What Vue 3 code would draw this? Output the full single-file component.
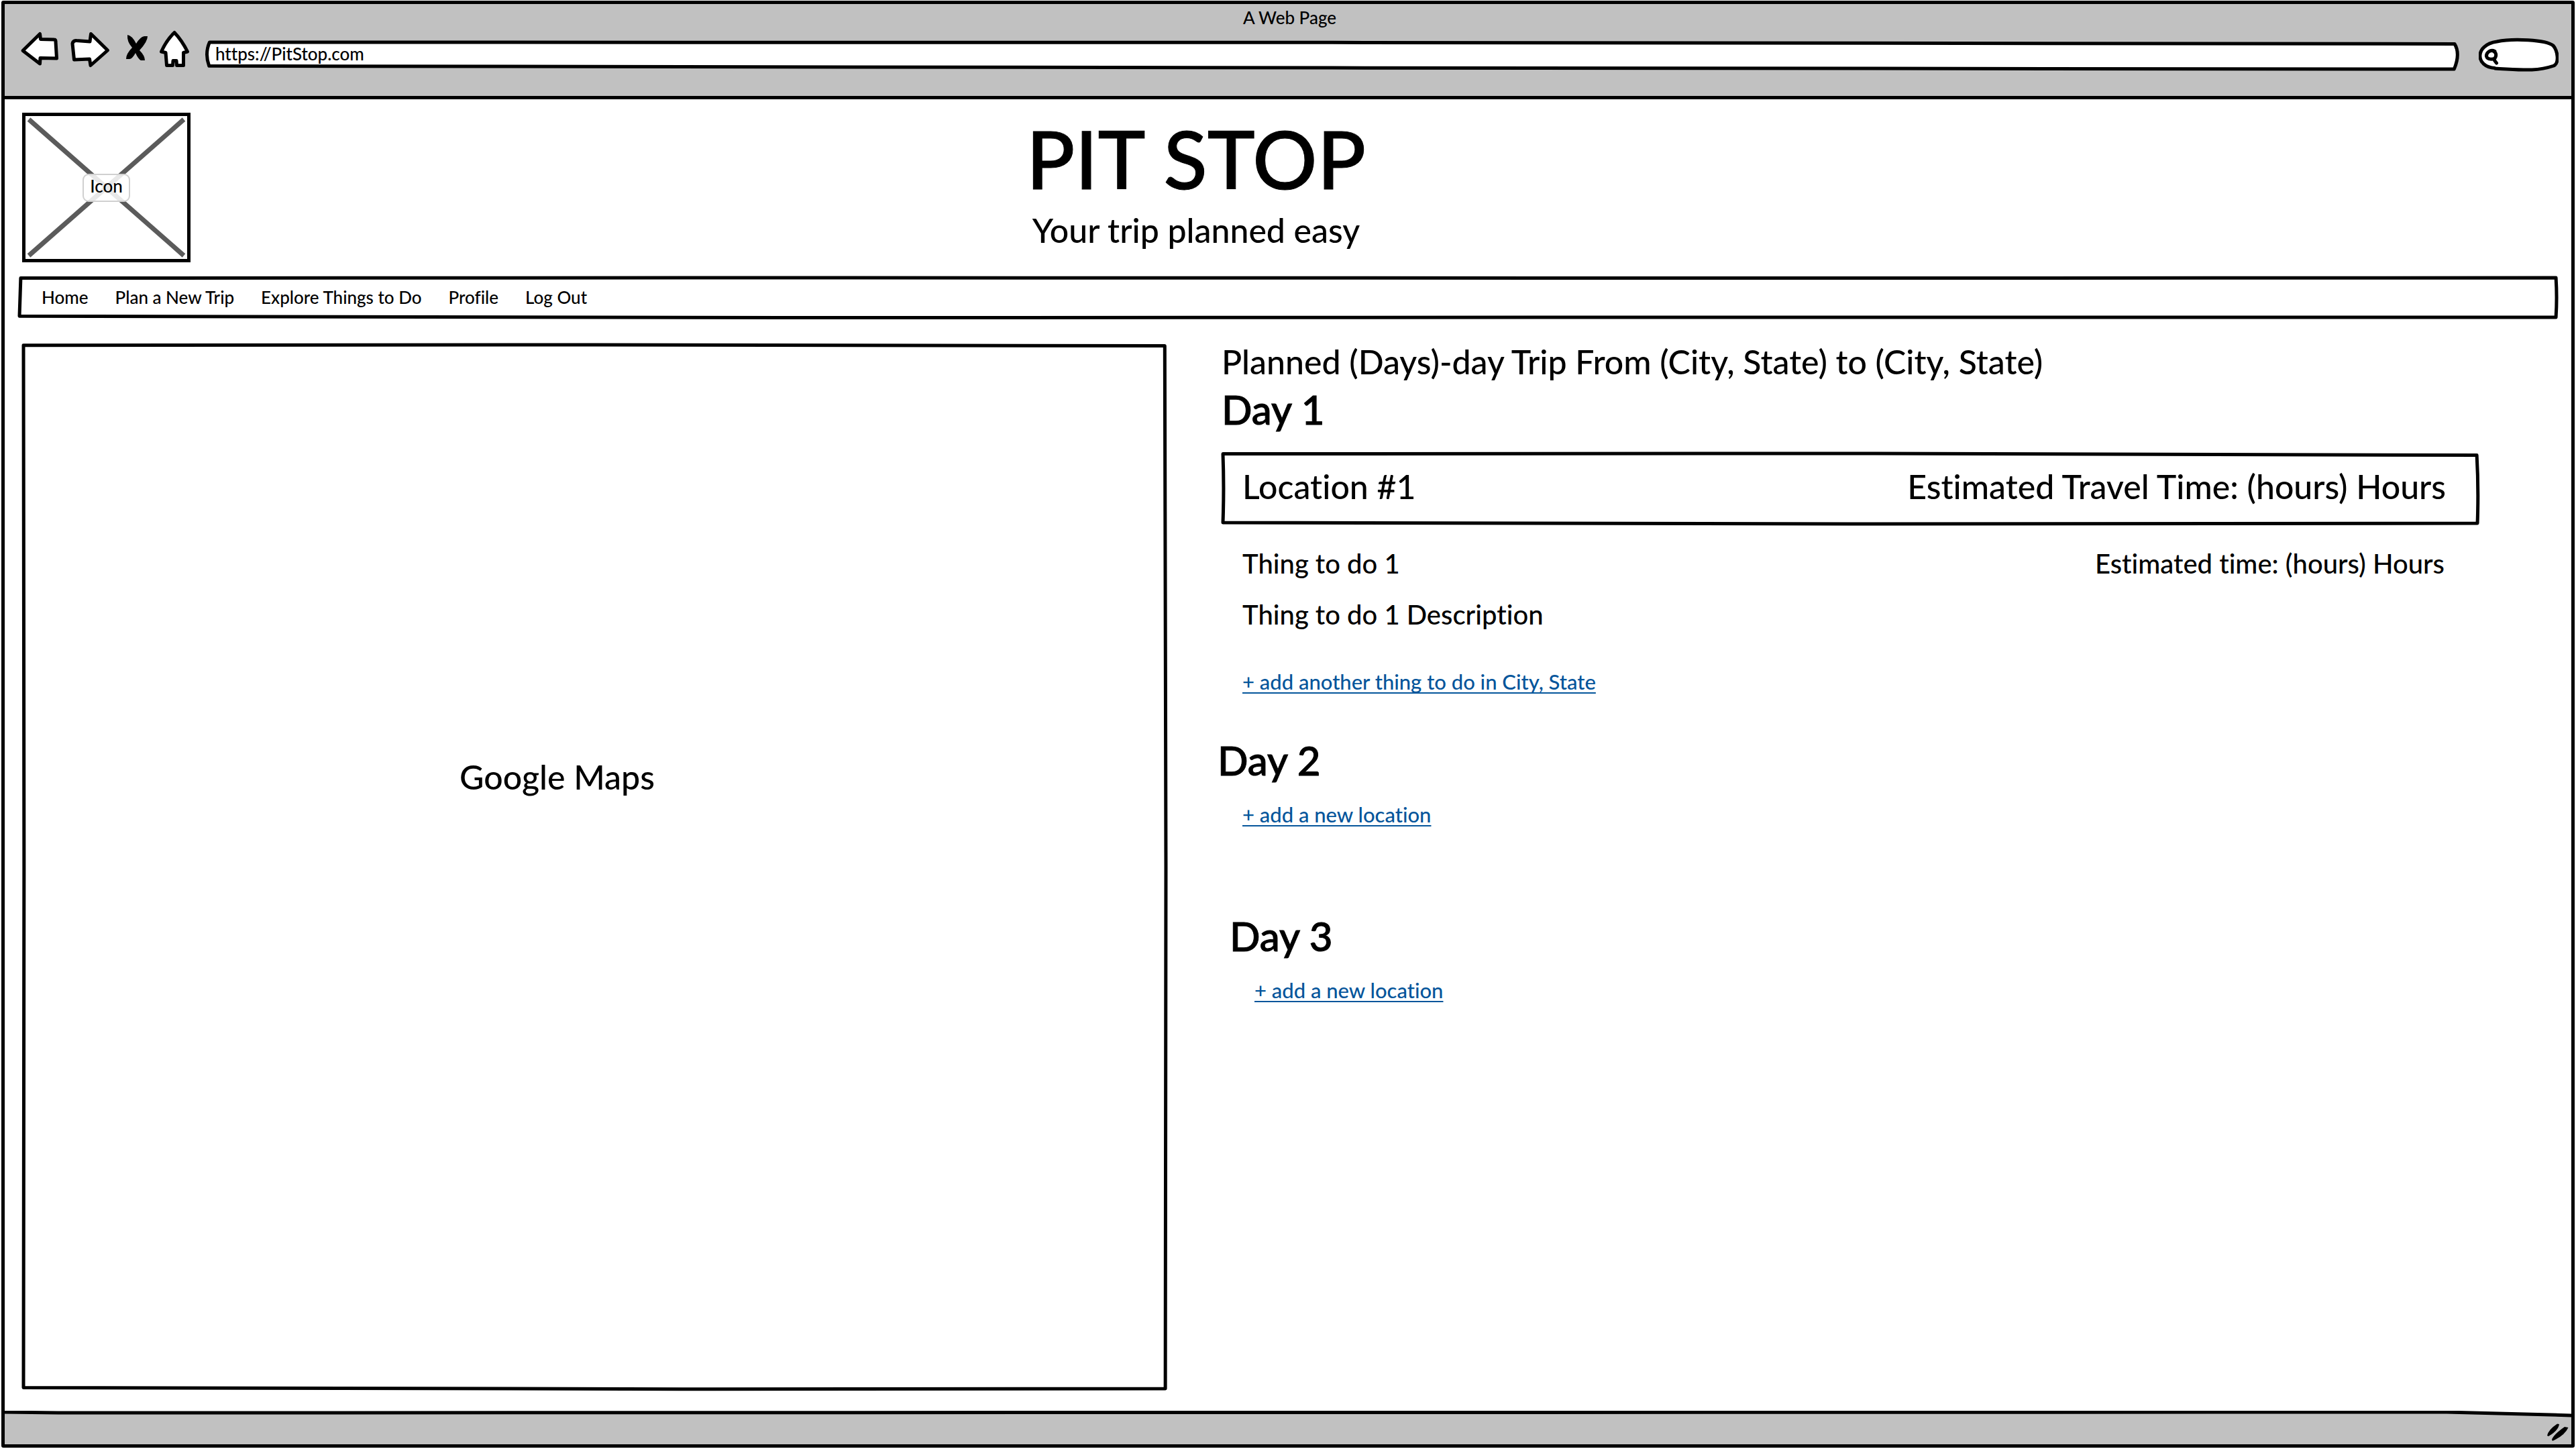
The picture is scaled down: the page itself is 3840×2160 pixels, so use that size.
<script setup>
import { ref } from 'vue'

const address = ref('https://PitStop.com')
const query = ref('')
const links = ['Home', 'Plan a New Trip', 'Explore Things to Do', 'Profile', 'Log Out']
</script>

<template>
  <div class="window">
    <header class="chrome">
      <div class="window-title">A Web Page</div>
      <div class="toolbar">
        <button class="tool" type="button" aria-label="Back">
          <svg width="56" height="64" viewBox="31 42 56 64">
            <path class="glyph" d="M34 75.500L59.500 50.500L60.500 58.500L81 59Q83 59 83 62L84.500 87L60 86.500L59.500 95Z" />
          </svg>
        </button>
        <button class="tool" type="button" aria-label="Forward">
          <svg width="58" height="64" viewBox="105 42 58 64">
            <path class="glyph" d="M108 65Q109 60 114 60.500L134 62L135.500 50.500L160.500 75L135 97.500L133.500 88L110.500 89Z" />
          </svg>
        </button>
        <button class="tool" type="button" aria-label="Stop">
          <svg width="38" height="64" viewBox="181 42 38 64">
            <path d="M190 52Q197 53 203 65Q209 55 215 54L220 54Q220 62 208 75Q216 83 216 90L210 90Q206 88 202 79Q197 88 193 88L188 88Q188 80 197 71Q189 62 190 52Z" />
          </svg>
        </button>
        <button class="tool" type="button" aria-label="Home">
          <svg width="46" height="64" viewBox="237 42 46 64">
            <path class="glyph" d="M260 48.500Q271 60 279.500 77L273.500 78.500L273.500 97.500L263.500 97.500L263 90.500L258 90.500L257.500 97.500L248.500 97.500L247 78.500L240.500 77Q248 60 260 48.500Z" />
          </svg>
        </button>
        <div class="address">
          <svg class="outline" viewBox="0 0 100 100" preserveAspectRatio="none">
            <path d="M.1 0L50 1L99.850 7Q100.120 50 99.830 118L50 112L.08 104Q-.12 50 .1 0Z" />
          </svg>
          <input v-model="address" type="text" aria-label="Address" />
        </div>
        <div class="search">
          <svg class="pill" width="119" height="52" viewBox="3695 56 119 52">
            <path class="glyph" d="M3719 101.500C3690 100 3688 67 3722 62C3745 57 3795 59 3806 68C3813 76 3815 94 3807 98C3780 107 3760 104 3719 102Z" />
            <path class="lens" d="M3719 76.500C3712 73 3706 79 3706.500 84C3708 90 3717 88 3719 87C3722 83 3721 78 3717 76.500M3717 88L3721.500 94" />
          </svg>
          <input v-model="query" type="search" aria-label="Search" />
        </div>
      </div>
    </header>

    <div class="banner">
      <div class="picture">
        <svg class="cross" viewBox="0 0 100 100" preserveAspectRatio="none">
          <path d="M0 0L100 100M100 0L0 100" />
        </svg>
        <span class="caption">Icon</span>
      </div>
      <div class="brand">
        <h1>PIT STOP</h1>
        <p>Your trip planned easy</p>
      </div>
    </div>

    <nav class="menu">
      <svg class="outline" viewBox="0 0 100 100" preserveAspectRatio="none">
        <path d="M.05 1L30 0L70 1L99.950 0Q100 50 99.950 100L60 100L30 101L0 97L.03 40L.05 1Z" />
      </svg>
      <a v-for="link in links" :key="link" href="#">{{ link }}</a>
    </nav>

    <main class="content">
      <section class="map">
        <svg class="outline" viewBox="0 0 100 100" preserveAspectRatio="none">
          <path d="M0 .05L50 0L99.900 .1L100 50L99.950 100L60 100.050L0 99.900L.05 50Z" />
        </svg>
        <span>Google Maps</span>
      </section>

      <div class="plan">
        <h2>Planned (Days)-day Trip From (City, State) to (City, State)</h2>

        <section class="day">
          <h3>Day 1</h3>
          <div class="location">
            <svg class="outline" viewBox="0 0 100 100" preserveAspectRatio="none">
              <path d="M0 .5L50 0L99.900 2.500Q100.050 50 99.950 100L50 101L0 99Q.1 50 0 .5Z" />
            </svg>
            <span>Location #1</span>
            <span>Estimated Travel Time: (hours) Hours</span>
          </div>
          <div class="activity">
            <div class="activity-row">
              <span>Thing to do 1</span>
              <span>Estimated time: (hours) Hours</span>
            </div>
            <p>Thing to do 1 Description</p>
            <a class="add" href="#">+ add another thing to do in City, State</a>
          </div>
        </section>

        <section class="day second">
          <h3>Day 2</h3>
          <a class="add" href="#">+ add a new location</a>
        </section>

        <section class="day third">
          <h3>Day 3</h3>
          <a class="add" href="#">+ add a new location</a>
        </section>
      </div>
    </main>

    <footer class="status">
      <svg class="edge" viewBox="0 0 3826 50" preserveAspectRatio="none">
        <path d="M-3 2L80 3L3640 2L3829 7V53H-3Z" />
      </svg>
      <svg class="grip" width="34" height="28" viewBox="3796 2121 34 28">
        <path d="M3797 2140Q3799 2131 3812 2122.500L3815 2123Q3814 2132 3799 2141ZM3804 2146Q3807 2138 3823 2127L3828.500 2128Q3823 2140 3805 2148Z" />
      </svg>
    </footer>
  </div>
</template>

<style>
body {
  margin: 0;
  background: #fff;
}
</style>

<style scoped>
.window {
  box-sizing: border-box;
  display: flex;
  flex-direction: column;
  min-height: calc(100vh - 3px);
  margin: 1px 2px 2px;
  border: 5px solid #000;
  border-radius: 3px;
  background: #fff;
  color: #000;
  font-family: Lato, "Liberation Sans", sans-serif;
  font-weight: 500;
  font-size: 26px;
  font-variant-ligatures: none;
}

h1, h2, h3, p {
  margin: 0;
  font-weight: inherit;
}

h1, h3 {
  -webkit-text-stroke: 1px #000;
}

.outline {
  position: absolute;
  top: 2px;
  left: 2px;
  width: calc(100% - 4px);
  height: calc(100% - 4px);
  overflow: visible;
  pointer-events: none;
}

.outline path {
  fill: #fff;
  stroke: #000;
  stroke-width: 5px;
  stroke-linejoin: round;
  vector-effect: non-scaling-stroke;
}

.outline ~ * {
  position: relative;
}

/* Browser chrome */
.chrome {
  padding: 4px 19px 37px 24px;
  border-bottom: 5px solid #000;
  background: #c1c1c1;
}

.window-title {
  line-height: 32px;
  text-align: center;
}

.toolbar {
  display: flex;
  gap: 18px;
  height: 64px;
}

.tool {
  padding: 0;
  border: 0;
  background: none;
}

.tool svg {
  display: block;
  overflow: visible;
}

.glyph {
  fill: #fff;
  stroke: #000;
  stroke-width: 5px;
  stroke-linejoin: round;
}

.address {
  position: relative;
  flex: 1;
  height: 38px;
  margin: 19px 11px 0 6px;
}

.address input {
  box-sizing: border-box;
  width: 100%;
  height: 38px;
  padding: 0 14px;
  border: 0;
  outline: 0;
  background: none;
  color: inherit;
  font: inherit;
}

.search {
  position: relative;
  width: 119px;
  height: 52px;
  margin-top: 14px;
}

.pill {
  position: absolute;
  top: 0;
  left: 0;
}

.lens {
  fill: none;
  stroke: #000;
  stroke-width: 5px;
  stroke-linecap: round;
}

.search input {
  position: relative;
  box-sizing: border-box;
  width: 100%;
  height: 100%;
  padding: 0 16px 0 36px;
  border: 0;
  outline: 0;
  background: none;
  font: inherit;
  appearance: none;
}

/* Site header */
.banner {
  display: flex;
  padding: 20px 0 21px 26px;
}

.picture {
  position: relative;
  display: flex;
  flex: none;
  align-items: center;
  justify-content: center;
  box-sizing: border-box;
  width: 251px;
  height: 223px;
  border: 5px solid #000;
}

.cross {
  position: absolute;
  top: 5px;
  left: 5px;
  width: calc(100% - 10px);
  height: calc(100% - 10px);
  overflow: visible;
}

.cross path {
  stroke: #5b5b5b;
  stroke-width: 7px;
  vector-effect: non-scaling-stroke;
}

.caption {
  position: relative;
  padding: 0 9px 6px;
  border: 2px solid #d0d0d0;
  border-radius: 9px;
  background: rgba(255, 255, 255, 0.86);
  line-height: 32px;
}

.brand {
  flex: 1;
  margin-right: 14.5%;
  padding-top: 12px;
  text-align: center;
}

.brand h1 {
  font-size: 120px;
  line-height: 112px;
}

.brand p {
  margin-top: 28px;
  font-size: 50px;
  line-height: 46px;
}

.menu {
  position: relative;
  display: flex;
  align-items: center;
  gap: 40px;
  height: 61px;
  margin: 0 19px 0 20px;
  padding: 0 35px 2px;
}

.menu a {
  color: inherit;
  text-decoration: none;
}

/* Map and itinerary */
.content {
  display: grid;
  flex: 1;
  grid-template-columns: 1707fr 1875fr;
  gap: 81px;
  padding: 32px 137px 31px 26px;
}

.map {
  position: relative;
  display: flex;
  align-items: center;
  justify-content: center;
  margin-top: 5px;
  padding: 0 112px 268px 0;
  font-size: 50px;
}

.plan h2 {
  font-size: 50px;
  line-height: 64px;
}

.plan h3 {
  font-size: 60px;
  line-height: 78px;
}

.location {
  position: relative;
  display: flex;
  align-items: center;
  justify-content: space-between;
  height: 102px;
  margin-top: 25px;
  padding: 0 50px 6px 31px;
  font-size: 50px;
}

.activity {
  padding: 34px 52px 0 31px;
  font-size: 40px;
  line-height: 48px;
}

.activity-row {
  display: flex;
  justify-content: space-between;
  margin-bottom: 28px;
}

.add {
  display: table;
  color: #04559b;
  font-size: 31px;
  line-height: 40px;
  text-decoration: underline;
  text-decoration-skip-ink: none;
  text-decoration-thickness: 2px;
  text-underline-offset: 4px;
}

.activity .add {
  margin-top: 56px;
}

.day > .add {
  margin-top: 22px;
  margin-left: 37px;
}

.second {
  margin-top: 58px;
  margin-left: -6px;
}

.third {
  margin-top: 122px;
  margin-left: 12px;
}

/* Status bar */
.status {
  position: relative;
  display: flex;
  align-items: flex-end;
  justify-content: flex-end;
  height: 50px;
}

.edge {
  position: absolute;
  top: 0;
  left: 0;
  width: 100%;
  height: 100%;
}

.edge path {
  fill: #c1c1c1;
  stroke: #000;
  stroke-width: 5px;
  vector-effect: non-scaling-stroke;
}

.grip {
  position: relative;
  margin: 0 3px 4px 0;
}
</style>
